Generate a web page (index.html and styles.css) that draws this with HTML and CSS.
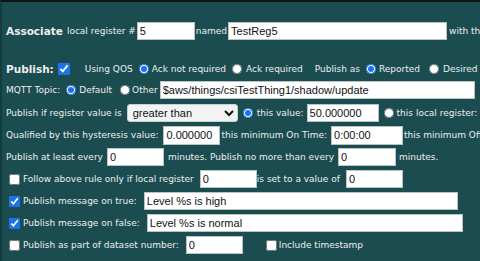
FILE: index.html
```html
<!DOCTYPE html>
<html>
<head>
<meta charset="utf-8">
<link rel="stylesheet" href="styles.css">
</head>
<body>
<div class="page">
  <div class="row r-assoc">
    <span class="big">Associate</span><span class="lbl l-reg">local register #</span>
    <input class="in w58" type="text" value="5">
    <span class="lbl l-named">named</span>
    <input class="in w219" type="text" value="TestReg5">
    <span class="lbl l-with">with this</span>
  </div>
  <div class="row r-pub">
    <span class="big">Publish:</span>
    <input class="cb cb-pub" type="checkbox" checked>
    <span class="lbl l-qos">Using QOS</span>
    <input class="rb rb-ack" type="radio" name="qos" checked>
    <span class="lbl l-r">Ack not required</span>
    <input class="rb rb-ack2" type="radio" name="qos">
    <span class="lbl l-r4">Ack required</span>
    <span class="lbl l-pas">Publish as</span>
    <input class="rb rb-pas" type="radio" name="as" checked>
    <span class="lbl l-r">Reported</span>
    <input class="rb rb-des" type="radio" name="as">
    <span class="lbl l-r4">Desired</span>
  </div>
  <div class="row">
    <span class="lbl">MQTT Topic:</span>
    <input class="rb rb-mq" type="radio" name="topic" checked>
    <span class="lbl l-r">Default</span>
    <input class="rb rb-oth" type="radio" name="topic">
    <span class="lbl l-r2">Other</span>
    <input class="in w315 in-other" type="text" value="$aws/things/csiTestThing1/shadow/update">
  </div>
  <div class="row r-cmp">
    <span class="lbl">Publish if register value is</span>
    <select class="sel">
      <option>greater than</option>
    </select>
    <input class="rb rb-val" type="radio" name="cmp" checked>
    <span class="lbl l-r4">this value:</span>
    <input class="in w72 in-val" type="text" value="50.000000">
    <input class="rb rb-loc" type="radio" name="cmp">
    <span class="lbl l-r">this local register:</span>
  </div>
  <div class="row">
    <span class="lbl">Qualified by this hysteresis value:</span>
    <input class="in w57 in-hys" type="text" value="0.000000">
    <span class="lbl l-tight">this minimum On Time:</span>
    <input class="in w72 in-on" type="text" value="0:00:00">
    <span class="lbl l-tight">this minimum Off Time:</span>
  </div>
  <div class="row">
    <span class="lbl">Publish at least every</span>
    <input class="in w57 in-least" type="text" value="0">
    <span class="lbl l-min1">minutes. Publish no more than every</span>
    <input class="in w58 in-more" type="text" value="0">
    <span class="lbl l-min2">minutes.</span>
  </div>
  <div class="row">
    <input class="cb cb-row" type="checkbox">
    <span class="lbl l-cb">Follow above rule only if local register</span>
    <input class="in w57 in-follow" type="text" value="0">
    <span class="lbl">is set to a value of</span>
    <input class="in w57 in-setval" type="text" value="0">
  </div>
  <div class="row">
    <input class="cb cb-row" type="checkbox" checked>
    <span class="lbl l-cb">Publish message on true:</span>
    <input class="in w314 in-true" type="text" value="Level %s is high">
  </div>
  <div class="row">
    <input class="cb cb-row" type="checkbox" checked>
    <span class="lbl l-cb">Publish message on false:</span>
    <input class="in w316 in-false" type="text" value="Level %s is normal">
  </div>
  <div class="row">
    <input class="cb cb-row" type="checkbox">
    <span class="lbl l-cb">Publish as part of dataset number:</span>
    <input class="in w57 in-ds" type="text" value="0">
    <input class="cb cb-ts" type="checkbox">
    <span class="lbl l-ts">Include timestamp</span>
  </div>
</div>
</body>
</html>
```
FILE: styles.css
```css
html, body {
  margin: 0;
  padding: 0;
  width: 480px;
  height: 261px;
  overflow: hidden;
}
body {
  background: #1b4d50;
  border-top: 2px solid #0c1414;
  border-left: 2px solid #143c3e;
  box-sizing: border-box;
}
.page {
  padding: 18px 0 0 4px;
  font-family: "DejaVu Sans", Verdana, sans-serif;
  font-size: 9px;
  color: #eceeee;
  white-space: nowrap;
}
.row {
  display: flex;
  align-items: center;
  height: 22px;
}
.r-assoc { margin-bottom: 17px; }
.r-pub { height: 20px; }
.r-cmp { height: 23px; }
.big {
  font-weight: bold;
  font-size: 10.5px;
}
.lbl { flex: none; }
.l-reg { margin-left: 4px; margin-right: 1px; }
.l-named { margin: 0 1px; }
.l-with { margin-left: 2px; }
.l-r { margin-left: 3px; }
.l-r2 { margin-left: 2px; }
.l-r4 { margin-left: 4px; }
.l-qos { margin-left: 15px; }
.l-pas { margin-left: 12px; }
.l-tight { margin-left: 1px; }
.l-min1 { margin-left: 4px; }
.l-min2 { margin-left: 3px; }
.l-cb { margin-left: 3px; }
.l-ts { margin-left: 2px; }

.in {
  flex: none;
  box-sizing: border-box;
  height: 18px;
  margin: 0;
  padding: 0 2px;
  border: 1px solid #b8c4c4;
  background: #fff;
  font-family: "Liberation Sans", Arial, sans-serif;
  font-size: 11px;
  color: #111;
  outline: none;
}
.w57 { width: 57px; }
.w58 { width: 58px; }
.w72 { width: 72px; }
.w219 { width: 219px; }
.w314 { width: 314px; }
.w315 { width: 315px; }
.w316 { width: 316px; }
.in-other { margin-left: 2px; }
.in-val { margin-left: 3px; }
.in-hys { margin-left: 5px; height: 19px; }
.in-on { margin-left: 4px; height: 19px; }
.in-least { margin-left: 4px; }
.in-more { margin-left: 4px; }
.in-follow { margin-left: 6px; }
.in-setval { margin-left: 6px; }
.in-true { margin-left: 7px; }
.in-false { margin-left: 7px; }
.in-ds { margin-left: 7px; }

.sel {
  flex: none;
  box-sizing: border-box;
  width: 111px;
  height: 18px;
  margin: 0 0 0 5px;
  padding: 0 1px;
  border: 1px solid #c8d0d0;
  border-radius: 3px;
  background: #f2f4f4;
  font-family: "Liberation Sans", Arial, sans-serif;
  font-size: 11px;
  color: #111;
}

.rb {
  flex: none;
  width: 10px;
  height: 10px;
  margin: 0;
  accent-color: #1a73e8;
}
.rb-ack { margin-left: 6px; }
.rb-ack2 { margin-left: 6px; }
.rb-pas { margin-left: 6px; }
.rb-des { margin-left: 9px; }
.rb-mq { margin-left: 6px; }
.rb-oth { margin-left: 8px; }
.rb-val { margin-left: 5px; }
.rb-loc { margin-left: 5px; }

.cb {
  flex: none;
  width: 11px;
  height: 11px;
  margin: 0;
  accent-color: #1a73e8;
}
.cb-pub { margin-left: 4px; width: 12px; height: 12px; }
.cb-row { margin-left: 3px; }
.cb-ts { margin-left: 23px; }
```
